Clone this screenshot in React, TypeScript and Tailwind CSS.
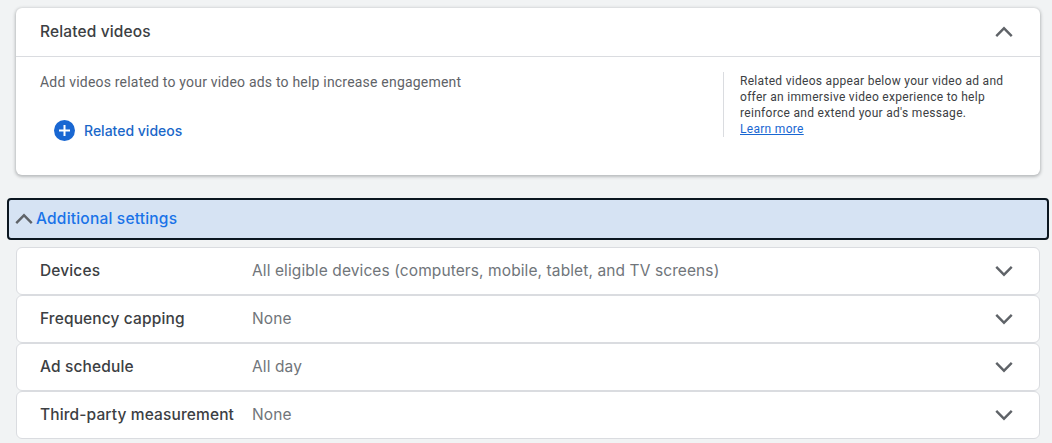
const settings = [
  { label: "Devices", value: "All eligible devices (computers, mobile, tablet, and TV screens)" },
  { label: "Frequency capping", value: "None" },
  { label: "Ad schedule", value: "All day" },
  { label: "Third-party measurement", value: "None" },
];

function Chevron({ up = false }: { up?: boolean }) {
  return (
    <svg width="24" height="24" viewBox="0 0 24 24" fill="#5f6368" className="shrink-0">
      <path d={up ? "M12 6.6l-8.6 8.6 1.7 1.7L12 10l6.9 6.9 1.7-1.7z" : "M12 17.4l8.6-8.6-1.7-1.7L12 14 5.1 7.1 3.4 8.8z"} />
    </svg>
  );
}

function PlusCircle() {
  return (
    <svg width="21" height="21" viewBox="0 0 21 21" className="shrink-0">
      <circle cx="10.5" cy="10.5" r="10.5" fill="#1967d2" />
      <path d="M9.5 5h2v4.5H16v2h-4.5V16h-2v-4.5H5v-2h4.5z" fill="#fff" />
    </svg>
  );
}

export default function App() {
  return (
    <div className="h-[443px] w-[1052px] overflow-hidden bg-[#f1f3f4] pt-2 font-['Roboto',sans-serif]">
      <section className="ml-4 h-[167px] w-[1024px] rounded-md bg-white shadow-[0_1px_3px_1px_rgba(60,64,67,0.3)]">
        <div className="flex h-[49px] items-center justify-between border-b border-[#dadce0] pl-6 pr-6">
          <h2 className="font-['Inter',sans-serif] text-[15.5px] font-medium tracking-[0.13px] text-[#3c4043]">Related videos</h2>
          <Chevron up />
        </div>
        <div className="flex">
          <div className="w-[707px] pl-6 pt-[15px]">
            <p className="text-[14px] tracking-[0.2px] text-[#5f6368]">Add videos related to your video ads to help increase engagement</p>
            <button className="ml-[14px] mt-[27px] flex items-center gap-[9px] font-['Inter',sans-serif] text-[14px] font-medium text-[#1a67c9]">
              <PlusCircle />
              Related videos
            </button>
          </div>
          <div className="mt-[15px] h-[65px] w-[290px] border-l border-[#dadce0] pl-[16px] pt-px text-[12px] leading-4 tracking-[0.3px] text-[#3c4043]">
            <p>Related videos appear below your video ad and offer an immersive video experience to help reinforce and extend your ad's message.</p>
            <a href="#" className="text-[#1967d2] underline">Learn more</a>
          </div>
        </div>
      </section>

      <button className="ml-[7px] mt-[23px] flex h-[42px] w-[1042px] items-center rounded-[4px] border-2 border-[#0b1620] bg-[#d6e3f3] pl-[3px] font-['Inter',sans-serif] text-[15.5px] font-medium tracking-[0.2px] text-[#1a73e8]">
        <Chevron up />
        Additional settings
      </button>

      <div className="ml-4 mt-[7px] flex w-[1024px] flex-col">
        {settings.map((row) => (
          <div key={row.label} className="flex h-12 items-center rounded-md border border-[#dadce0] bg-white pl-[23px] pr-[23px]">
            <span className="w-[212px] shrink-0 font-['Inter',sans-serif] text-[15.5px] font-medium tracking-[0.13px] text-[#3c4043]">{row.label}</span>
            <span className="flex-1 font-['Inter',sans-serif] text-[15.5px] tracking-[0.1px] text-[#70757a]">{row.value}</span>
            <Chevron />
          </div>
        ))}
      </div>
    </div>
  );
}
